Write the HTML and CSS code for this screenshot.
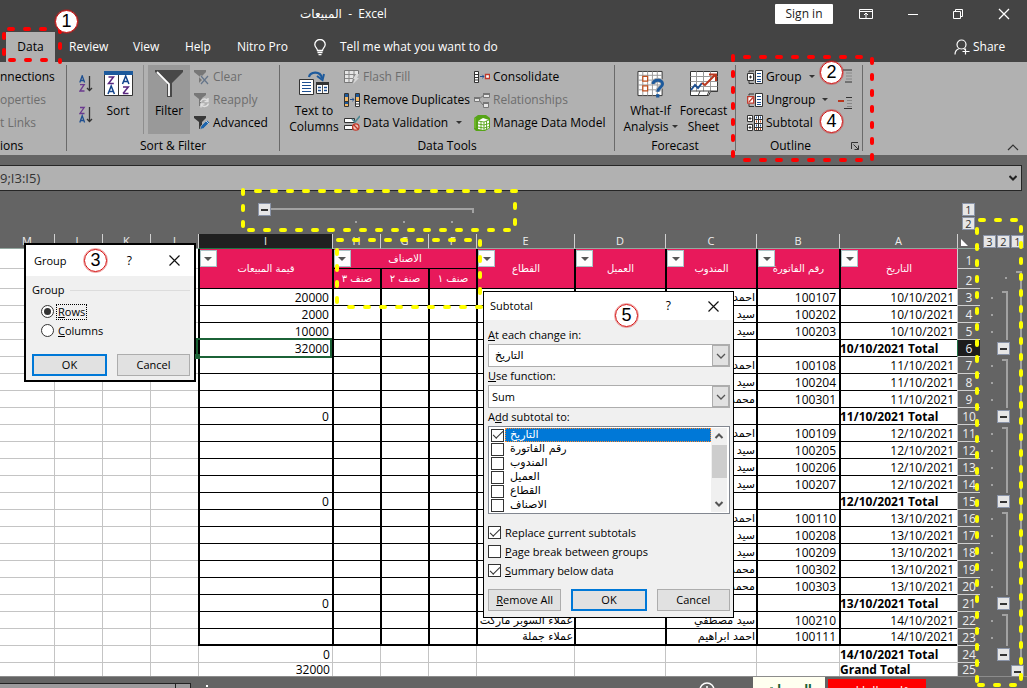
FILE: index.html
```html
<!DOCTYPE html>
<html lang="en">
<head>
    <meta charset="UTF-8">
    <meta name="viewport" content="width=device-width, initial-scale=1.0">
    <title>المبيعات - Excel</title>
    <link rel="stylesheet" href="styles.css">
</head>
<body>

    <header class="titlebar">
        <div class="title"><bdi>المبيعات</bdi>&nbsp; - &nbsp;Excel</div>
        <button class="signin">Sign in</button>
        <div class="window-buttons">
            <button aria-label="Ribbon display options"><svg width="14" height="12" viewBox="0 0 14 12"><path d="M.5 1.5h13v9H.5zM.5 3.5h13M7 10V5M5 7l2-2 2 2" fill="none" stroke="#fff"/></svg></button>
            <button aria-label="Minimize"><svg width="12" height="12" viewBox="0 0 12 12"><path d="M1 6.500h10" stroke="#fff"/></svg></button>
            <button aria-label="Restore"><svg width="12" height="12" viewBox="0 0 12 12"><path d="M1.500 3.500h7v7h-7zM3.500 3.500v-2h7v7h-2" fill="none" stroke="#fff"/></svg></button>
            <button aria-label="Close"><svg width="12" height="12" viewBox="0 0 12 12"><path d="M1 1l10 10M11 1L1 11" stroke="#fff" stroke-width="1.300"/></svg></button>
        </div>
    </header>

    <nav class="tabs">
        <button class="tab active">Data</button>
        <button class="tab">Review</button>
        <button class="tab">View</button>
        <button class="tab">Help</button>
        <button class="tab nitro">Nitro Pro</button>
        <button class="tab tell">
            <svg width="12" height="17" viewBox="0 0 12 17"><path d="M3.500 11.500C3.500 9 .8 8.500.8 5.500a5.200 5 0 0 1 10.400 0c0 3-2.700 3.500-2.700 6zM3.500 13.500h5M4.500 15.700h3" fill="none" stroke="#fff" stroke-width="1.300"/></svg>
            Tell me what you want to do
        </button>
        <button class="tab share">
            <svg width="16" height="16" viewBox="0 0 16 16"><circle cx="7.500" cy="5.500" r="4.500" fill="none" stroke="#fff" stroke-width="1.200"/><path d="M1 15.500c0-3 2-5.300 4.500-6M9.500 9.500l1.500 1M11.500 9.500v6M8.500 12.500h7" fill="none" stroke="#fff" stroke-width="1.200"/></svg>
            Share
        </button>
    </nav>

    <section class="ribbon">
        <div class="group connections">
            <div class="tools">
                <div class="stack">
                    <button class="tool">nnections</button>
                    <button class="tool" disabled>operties</button>
                    <button class="tool" disabled>t Links</button>
                </div>
            </div>
            <div class="caption">ions</div>
        </div>

        <div class="group sort-filter">
            <div class="tools">
                <div class="sorters">
                    <button aria-label="Sort A to Z">
                        <svg width="14" height="18" viewBox="0 0 14 18"><g fill="none" stroke-width="1.300"><path d="M.8 7.500L3.200.8l2.400 6.700M1.700 5.500h3" stroke="#1d4f91"/><path d="M1 9.700h4.200L1 16h4.500" stroke="#6b3a8f"/><path d="M10.500 1v14.500M8 13l2.500 2.500L13 13" stroke="#333"/></g></svg>
                    </button>
                    <button aria-label="Sort Z to A">
                        <svg width="14" height="18" viewBox="0 0 14 18"><g fill="none" stroke-width="1.300"><path d="M1 1.500h4.200L1 7.500h4.500" stroke="#6b3a8f"/><path d="M.8 16.500l2.400-6.700 2.400 6.700M1.700 14.500h3" stroke="#1d4f91"/><path d="M10.500 1v14.500M8 13l2.500 2.500L13 13" stroke="#333"/></g></svg>
                    </button>
                </div>
                <button class="big sort">
                    <svg width="29" height="28" viewBox="0 0 29 28"><path d="M.5 1.500h28v24H.5z" fill="#fff" stroke="#333"/><path d="M0 1h29v4H0z" fill="#1d5a9c"/><path d="M14.500 5v20" stroke="#333"/><g fill="none" stroke-width="1.500"><path d="M4.500 7h5l-5 6.500h5.300M19 23.500h5.500M19 17h5.300l-5.300 6.500" stroke="#59277f"/><path d="M4 24l3.200-8 3.200 8M5.200 21.500h4M18.500 14l3.200-8 3.200 8M19.700 11.500h4" stroke="#12448c"/></g></svg>
                    <span>Sort</span>
                </button>
                <button class="big filter">
                    <svg width="28" height="28" viewBox="0 0 28 28"><path d="M0 0h28v2L17 13v14h-5V13L0 2z" fill="#484848"/><path d="M2 2l12 12v12" fill="none" stroke="#fff" stroke-width="1.800"/></svg>
                    <span>Filter</span>
                </button>
                <div class="stack">
                    <button class="tool" disabled>
                        <svg width="16" height="16" viewBox="0 0 16 16"><path d="M0 1h12v2L8 7v7H5V7L0 3z" fill="#777"/><path d="M6 7l8 8M14 7l-8 8" stroke="#b1b1b1" stroke-width="3"/><path d="M7 7l7 8M14 7l-7 8" stroke="#65758a" stroke-width="1.200"/></svg>
                        Clear
                    </button>
                    <button class="tool" disabled>
                        <svg width="16" height="16" viewBox="0 0 16 16"><path d="M0 1h12v2L8 6 6 14H5V7L0 3z" fill="#777"/><path d="M6.500 10a4 4 0 0 1 7-1.500M14 6v3.500h-3.500M14.500 11.500a4 4 0 0 1-7 1.500M7 15.500V12h3.500" fill="none" stroke="#e0e0e0" stroke-width="1.400"/></svg>
                        Reapply
                    </button>
                    <button class="tool">
                        <svg width="16" height="16" viewBox="0 0 16 16"><path d="M0 1h12v2L8 7v7H5V7L0 3z" fill="#383838"/><path d="M6 14.500l1-3.500 6-6 2.500 2.500-6 6z" fill="#1d65ad" stroke="#b1b1b1" stroke-width=".8"/><path d="M12 6l2.500 2.500" stroke="#fff" stroke-width=".7"/></svg>
                        Advanced
                    </button>
                </div>
            </div>
            <div class="caption">Sort &amp; Filter</div>
        </div>

        <div class="group data-tools">
            <div class="tools">
                <button class="big columns">
                    <svg width="30" height="28" viewBox="0 0 30 28"><path d="M.5 9.500h14v15H.5z" fill="#fff" stroke="#333"/><path d="M3 12.500h9M3 15.500h9M3 18.500h9M3 21.500h9" stroke="#1d4f91" stroke-width="1.200"/><path d="M17.500 12.500h12v11h-12z" fill="#fff" stroke="#333"/><path d="M17 12h13v3H17z" fill="#333"/><path d="M23.500 15v8" stroke="#555"/><path d="M19 17.500h3M19 20.500h3M25 17.500h3M25 20.500h3" stroke="#1d4f91" stroke-width="1.300"/><path d="M10 7c1-5 11-7 13 1" fill="none" stroke="#1d5a9c" stroke-width="2.200"/><path d="M18 6l5.500 4L25 4" fill="none" stroke="#1d5a9c" stroke-width="2"/></svg>
                    <span>Text to<br>Columns</span>
                </button>
                <div class="stack first">
                    <button class="tool" disabled>
                        <svg width="16" height="16" viewBox="0 0 16 16"><path d="M.5 1.500h14v4h-4l-2 8h-8z" fill="#e6e6e6" stroke="#777"/><path d="M1 5.500h12M1 9.500h8M5 2v11M10 2v5" stroke="#888"/><path d="M12 5h3l-2 4h2l-6 6 2-5H9z" fill="#d8d8d8"/></svg>
                        Flash Fill
                    </button>
                    <button class="tool">
                        <svg width="16" height="16" viewBox="0 0 16 16"><path d="M.5 1.500h4v13h-4zM11.500 1.500h4v13h-4z" fill="#fff" stroke="#333"/><path d="M1 2h3v3H1zM1 10h3v2H1zM12 2h3v3h-3z" fill="#1d5a9c"/><path d="M1 5h3v4H1zM1 12h3v2H1zM12 5h3v4h-3z" fill="#f3b968"/><path d="M0 9.500h5M11 9.500h5M11 12h5" stroke="#333"/><path d="M6 7.500h4M8.300 5.800L10 7.500 8.300 9.200" fill="none" stroke="#1d4f91"/></svg>
                        Remove Duplicates
                    </button>
                    <button class="tool">
                        <svg width="16" height="16" viewBox="0 0 16 16"><path d="M.5 3.500h10v4H.5zM.5 10.500h8v4h-8z" fill="#fff" stroke="#333"/><path d="M8 4l3 3 5-6" fill="none" stroke="#4c8794" stroke-width="1.600"/><circle cx="11.800" cy="12" r="3.200" fill="#efc2b8" stroke="#c0392b" stroke-width="1.300"/><path d="M9.700 9.800l4.300 4.400" stroke="#c0392b" stroke-width="1.300"/></svg>
                        Data Validation
                        <span class="caret"></span>
                    </button>
                </div>
                <div class="stack">
                    <button class="tool">
                        <svg width="16" height="16" viewBox="0 0 16 16"><path d="M.5 2.500h4v11h-4zM.5 5.500h4M.5 8.500h4M.5 11h4" fill="#fff" stroke="#333"/><path d="M6 7.500h4M8.300 5.800L10 7.500 8.300 9.200" fill="none" stroke="#1d4f91"/><path d="M11.500 5.500h4v4h-4z" fill="#fff" stroke="#c0392b" stroke-width="1.300"/></svg>
                        Consolidate
                    </button>
                    <button class="tool" disabled>
                        <svg width="16" height="16" viewBox="0 0 16 16"><path d="M5 7l5-4M5 8l4 5" stroke="#777"/><path d="M.5 5.500h5v4h-5zM9.500 1.500h6v4h-6zM9.500 10.500h5v5h-5z" fill="#e6e6e6" stroke="#777"/><path d="M0 5h6v2H0zM9 1h7v2H9zM9 10h6v2H9z" fill="#777"/></svg>
                        Relationships
                    </button>
                    <button class="tool">
                        <svg width="16" height="16" viewBox="0 0 16 16"><path d="M0 3l4-3h8l4 3v10l-5 3H2l-2-2z" fill="#56a417"/><path d="M1 3v10" stroke="#86c440"/><path d="M4 6l5-3 6 2v8l-5 2-6-1z" fill="#fff"/><path d="M4 6l6 1 5-2M10 7v8M7 6.500v8M12.500 6v8M4 9l6 1 5-1.500M4 12l6 1 5-1.500" fill="none" stroke="#56a417" stroke-width=".9"/></svg>
                        Manage Data Model
                    </button>
                </div>
            </div>
            <div class="caption">Data Tools</div>
        </div>

        <div class="group forecast">
            <div class="tools">
                <button class="big">
                    <svg width="28" height="28" viewBox="0 0 28 29"><path d="M.5 1.500h25v25H.5z" fill="#fff" stroke="#333"/><path d="M.5 5.500h25M.5 10.500h25M.5 15.500h25M.5 20.500h25M5.500 1.500v25M10.500 1.500v25M15.500 1.500v25M20.500 1.500v25" stroke="#999"/><path d="M5.500 6.500h5v5h-5zM5.500 16.500h5v5h-5z" fill="#fff" stroke="#c0501f" stroke-width="1.300"/><path d="M16 14.500c1-5.500 10-5 10 0 0 3.500-5 3.500-5 8" fill="none" stroke="#b1b1b1" stroke-width="5"/><path d="M16 14.500c1-5.500 10-5 10 0 0 3.500-5 3.500-5 8" fill="none" stroke="#1d5a9c" stroke-width="3"/><path d="M19.300 25h3.400v3.500h-3.400z" fill="#1d5a9c"/></svg>
                    <span>What-If<br>Analysis<i class="caret"></i></span>
                </button>
                <button class="big">
                    <svg width="28" height="28" viewBox="0 0 28 28"><path d="M.5 1.500h27v20h-7l-2 4h-18z" fill="#fff" stroke="#333"/><path d="M.5 6.500h27M.5 11.500h27M.5 16.500h27M6.500 1.500v20M13.500 1.500v20M20.500 1.500v20" stroke="#999"/><path d="M1 21h27M10 21l-2 5M19 21l-2 5" stroke="#444"/><path d="M1 20l4-5 3 3 4-5" fill="none" stroke="#1d4f91" stroke-width="2"/><path d="M12 13l3 2 10-10M19 4.500h7V11" fill="none" stroke="#b8371f" stroke-width="2"/></svg>
                    <span>Forecast<br>Sheet</span>
                </button>
            </div>
            <div class="caption">Forecast</div>
        </div>

        <div class="group outline">
            <div class="tools">
                <div class="stack">
                    <button class="tool">
                        <svg width="17" height="16" viewBox="0 0 17 16"><path d="M2 3.500V2h5M2 12v2.500h5" fill="none" stroke="#333"/><path d="M.5 4.500h6v7h-6z" fill="#fff" stroke="#333"/><path d="M2 8h3M3.500 6.500v3" stroke="#333"/><path d="M8.500 1.500h7v13h-7z" fill="#fff" stroke="#333"/><path d="M10 4.500h4M10 7.500h4M10 10.500h4M10 12.500h4" stroke="#1d4f91"/></svg>
                        Group
                        <span class="caret"></span>
                    </button>
                    <button class="tool">
                        <svg width="17" height="16" viewBox="0 0 17 16"><path d="M2 3.500V2h5M2 12v2.500h5" fill="none" stroke="#333"/><path d="M.7 4.700h6v6.500h-6z" fill="#fff" stroke="#c0392b" stroke-width="1.300"/><path d="M2 10l4-4.500" stroke="#c0392b" stroke-width="1.300"/><path d="M8.500 1.500h7v13h-7z" fill="#fff" stroke="#333"/><path d="M10 4.500h4M10 7.500h4M10 10.500h4M10 12.500h4" stroke="#1d4f91"/></svg>
                        Ungroup
                        <span class="caret"></span>
                    </button>
                    <button class="tool">
                        <svg width="17" height="16" viewBox="0 0 17 16"><path d="M.5.500h5v6h-5zM.5 9.500h5v6h-5zM7.500.500h8v15h-8z" fill="#fff" stroke="#333"/><path d="M1.500 3.500h3M3 2v3M1.500 12.500h3M3 11v3M7.500 4.500h8M7.500 8.500h8M7.500 12.500h8M11.500.500v15" stroke="#333"/><path d="M9 2.500h1M13 2.500h1M9 10.500h1M13 10.500h1" stroke="#1d4f91" stroke-width="2"/><path d="M9 6.500h1M13 6.500h1M9 14h1M13 14h1" stroke="#c0501f" stroke-width="2"/></svg>
                        Subtotal
                    </button>
                </div>
                <div class="details">
                    <button aria-label="Show detail"><svg width="15" height="14" viewBox="0 0 15 14"><path d="M5 1h9M7 13h7" stroke="#333"/><path d="M8 4h6M8 7h6M8 10h6" stroke="#888"/></svg></button>
                    <button aria-label="Hide detail"><svg width="15" height="14" viewBox="0 0 15 14"><path d="M0 5h6" stroke="#b8371f" stroke-width="2"/><path d="M8 1.500h6M6 12.500h8" stroke="#333"/><path d="M9 4.500h5M9 7.500h5M9 10.500h5" stroke="#888"/></svg></button>
                </div>
            </div>
            <div class="caption">Outline
                <button class="launcher" aria-label="Outline settings"><svg width="8" height="8" viewBox="0 0 8 8"><path d="M.5 7V.5H7M2.500 2.500l5 5M7.500 3.500v4h-4" fill="none" stroke="#333"/></svg></button>
            </div>
        </div>

        <button class="collapse" aria-label="Collapse the ribbon"><svg width="12" height="7" viewBox="0 0 12 7"><path d="M1 6l5-5 5 5" fill="none" stroke="#333" stroke-width="1.200"/></svg></button>
    </section>

    <div class="formula">
        <span>9;I3:I5)</span>
        <svg width="8" height="6" viewBox="0 0 8 6"><path d="M.5 1L4 4.500 7.500 1" fill="none" stroke="#222" stroke-width="2"/></svg>
    </div>

    <main class="sheet">
        <table>
            <colgroup>
                <col class="w-gutter"><col class="w-head"><col class="w-a"><col class="w-b"><col class="w-c"><col class="w-c"><col class="w-e"><col class="w-s"><col class="w-s"><col class="w-s"><col class="w-i"><col class="w-s"><col class="w-s"><col class="w-s"><col>
            </colgroup>
            <thead>
                <tr class="level one"><td></td><td><button class="box">1</button></td><td colspan="5"></td><td colspan="3"><div class="bar hook"></div></td><td><div class="span"><button class="box minus" aria-label="Collapse columns"></button><div class="bar"></div></div></td><td colspan="4"></td></tr>
                <tr class="level two"><td></td><td><button class="box">2</button></td><td colspan="5"></td><td><i class="dot"></i></td><td><i class="dot"></i></td><td><i class="dot"></i></td><td colspan="5"></td></tr>
                <tr class="letters"><td class="g"><button class="box">3</button><button class="box">2</button><button class="box">1</button></td><th class="corner"><svg width="7" height="7" viewBox="0 0 7 7"><path d="M0 0v7h7z" fill="#fff"/></svg></th><th>A</th><th>B</th><th>C</th><th>D</th><th>E</th><th>F</th><th>G</th><th>H</th><th class="picked">I</th><th>J</th><th>K</th><th>L</th><th>M</th></tr>
            </thead>
            <tbody>
                <tr class="top"><td class="g"></td><th>1</th><td class="hd" rowspan="2"><button class="drop" aria-label="Filter"></button>التاريخ</td><td class="hd" rowspan="2"><button class="drop" aria-label="Filter"></button>رقم الفاتورة</td><td class="hd" rowspan="2"><button class="drop" aria-label="Filter"></button>المندوب</td><td class="hd" rowspan="2"><button class="drop" aria-label="Filter"></button>العميل</td><td class="hd" rowspan="2"><button class="drop" aria-label="Filter"></button>القطاع</td><td class="hd" colspan="3"><button class="drop" aria-label="Filter"></button>الاصناف</td><td class="hd" rowspan="2"><button class="drop" aria-label="Filter"></button>قيمة المبيعات</td><td class="e"></td><td class="e"></td><td class="e"></td><td class="e last"></td></tr>
                <tr class="top"><td class="g"><i></i><i class="dot"></i><i class="start"></i></td><th>2</th><td class="hd">صنف ١</td><td class="hd">صنف ٢</td><td class="hd">صنف ٣</td><td class="e"></td><td class="e"></td><td class="e"></td><td class="e last"></td></tr>
                <tr><td class="g"><i class="dot"></i><i class="start"></i><i class="line"></i></td><th>3</th><td>10/10/2021</td><td>100107</td><td>احمد ابراهيم</td><td></td><td></td><td></td><td></td><td></td><td>20000</td><td></td><td></td><td></td><td></td></tr>
                <tr><td class="g"><i class="dot"></i><i class="line"></i><i class="line"></i></td><th>4</th><td>10/10/2021</td><td>100202</td><td>سيد مصطفي</td><td></td><td></td><td></td><td></td><td></td><td>2000</td><td></td><td></td><td></td><td></td></tr>
                <tr><td class="g"><i class="dot"></i><i class="line"></i><i class="line"></i></td><th>5</th><td>10/10/2021</td><td>100203</td><td>سيد مصطفي</td><td></td><td></td><td></td><td></td><td></td><td>10000</td><td></td><td></td><td></td><td></td></tr>
                <tr><td class="g"><i></i><button class="box minus" aria-label="Collapse rows 3 to 5"></button><i class="line"></i></td><th class="picked">6</th><td class="total">10/10/2021 Total</td><td></td><td></td><td></td><td></td><td></td><td></td><td></td><td class="selected">32000</td><td></td><td></td><td></td><td></td></tr>
                <tr><td class="g"><i class="dot"></i><i class="start"></i><i class="line"></i></td><th>7</th><td>11/10/2021</td><td>100108</td><td>احمد ابراهيم</td><td></td><td></td><td></td><td></td><td></td><td></td><td></td><td></td><td></td><td></td></tr>
                <tr><td class="g"><i class="dot"></i><i class="line"></i><i class="line"></i></td><th>8</th><td>11/10/2021</td><td>100204</td><td>سيد مصطفي</td><td></td><td></td><td></td><td></td><td></td><td></td><td></td><td></td><td></td><td></td></tr>
                <tr><td class="g"><i class="dot"></i><i class="line"></i><i class="line"></i></td><th>9</th><td>11/10/2021</td><td>100301</td><td>محمد</td><td></td><td></td><td></td><td></td><td></td><td></td><td></td><td></td><td></td><td></td></tr>
                <tr><td class="g"><i></i><button class="box minus" aria-label="Collapse rows 7 to 9"></button><i class="line"></i></td><th>10</th><td class="total">11/10/2021 Total</td><td></td><td></td><td></td><td></td><td></td><td></td><td></td><td>0</td><td></td><td></td><td></td><td></td></tr>
                <tr><td class="g"><i class="dot"></i><i class="start"></i><i class="line"></i></td><th>11</th><td>12/10/2021</td><td>100109</td><td>احمد ابراهيم</td><td></td><td></td><td></td><td></td><td></td><td></td><td></td><td></td><td></td><td></td></tr>
                <tr><td class="g"><i class="dot"></i><i class="line"></i><i class="line"></i></td><th>12</th><td>12/10/2021</td><td>100205</td><td>سيد مصطفي</td><td></td><td></td><td></td><td></td><td></td><td></td><td></td><td></td><td></td><td></td></tr>
                <tr><td class="g"><i class="dot"></i><i class="line"></i><i class="line"></i></td><th>13</th><td>12/10/2021</td><td>100206</td><td>سيد مصطفي</td><td></td><td></td><td></td><td></td><td></td><td></td><td></td><td></td><td></td><td></td></tr>
                <tr><td class="g"><i class="dot"></i><i class="line"></i><i class="line"></i></td><th>14</th><td>12/10/2021</td><td>100207</td><td>سيد مصطفي</td><td></td><td></td><td></td><td></td><td></td><td></td><td></td><td></td><td></td><td></td></tr>
                <tr><td class="g"><i></i><button class="box minus" aria-label="Collapse rows 11 to 14"></button><i class="line"></i></td><th>15</th><td class="total">12/10/2021 Total</td><td></td><td></td><td></td><td></td><td></td><td></td><td></td><td>0</td><td></td><td></td><td></td><td></td></tr>
                <tr><td class="g"><i class="dot"></i><i class="start"></i><i class="line"></i></td><th>16</th><td>13/10/2021</td><td>100110</td><td>احمد ابراهيم</td><td></td><td></td><td></td><td></td><td></td><td></td><td></td><td></td><td></td><td></td></tr>
                <tr><td class="g"><i class="dot"></i><i class="line"></i><i class="line"></i></td><th>17</th><td>13/10/2021</td><td>100208</td><td>سيد مصطفي</td><td></td><td></td><td></td><td></td><td></td><td></td><td></td><td></td><td></td><td></td></tr>
                <tr><td class="g"><i class="dot"></i><i class="line"></i><i class="line"></i></td><th>18</th><td>13/10/2021</td><td>100209</td><td>سيد مصطفي</td><td></td><td></td><td></td><td></td><td></td><td></td><td></td><td></td><td></td><td></td></tr>
                <tr><td class="g"><i class="dot"></i><i class="line"></i><i class="line"></i></td><th>19</th><td>13/10/2021</td><td>100302</td><td>محمد</td><td></td><td></td><td></td><td></td><td></td><td></td><td></td><td></td><td></td><td></td></tr>
                <tr><td class="g"><i class="dot"></i><i class="line"></i><i class="line"></i></td><th>20</th><td>13/10/2021</td><td>100303</td><td>محمد</td><td></td><td></td><td></td><td></td><td></td><td></td><td></td><td></td><td></td><td></td></tr>
                <tr><td class="g"><i></i><button class="box minus" aria-label="Collapse rows 16 to 20"></button><i class="line"></i></td><th>21</th><td class="total">13/10/2021 Total</td><td></td><td></td><td></td><td></td><td></td><td></td><td></td><td>0</td><td></td><td></td><td></td><td></td></tr>
                <tr><td class="g"><i class="dot"></i><i class="start"></i><i class="line"></i></td><th>22</th><td>14/10/2021</td><td>100210</td><td>سيد مصطفي</td><td></td><td>عملاء السوبر ماركت</td><td></td><td></td><td></td><td></td><td></td><td></td><td></td><td></td></tr>
                <tr class="bottom"><td class="g"><i class="dot"></i><i class="line"></i><i class="line"></i></td><th>23</th><td>14/10/2021</td><td>100111</td><td>احمد ابراهيم</td><td></td><td>عملاء جملة</td><td></td><td></td><td></td><td></td><td></td><td></td><td></td><td></td></tr>
                <tr class="plain"><td class="g"><i></i><button class="box minus" aria-label="Collapse rows 22 to 23"></button><i class="line"></i></td><th>24</th><td class="total">14/10/2021 Total</td><td></td><td></td><td></td><td></td><td></td><td></td><td></td><td>0</td><td></td><td></td><td></td><td></td></tr>
                <tr class="plain grand"><td class="g"><i></i><i></i><button class="box minus" aria-label="Collapse all rows"></button></td><th>25</th><td class="total">Grand Total</td><td></td><td></td><td></td><td></td><td></td><td></td><td></td><td>32000</td><td></td><td></td><td></td><td></td></tr>
            </tbody>
        </table>
    </main>

    <footer class="sheetbar">
        <div class="scroller"></div>
        <button class="step" aria-label="Scroll right"><svg width="5" height="7" viewBox="0 0 5 7"><path d="M0 0l5 3.500L0 7z" fill="#222"/></svg></button>
        <i class="grip"></i>
        <button class="add" aria-label="New sheet"><svg width="16" height="16" viewBox="0 0 16 16"><circle cx="8" cy="8" r="7" fill="none" stroke="#fff" stroke-width="1.500"/><path d="M8 4v8M4 8h8" stroke="#fff" stroke-width="1.500"/></svg></button>
        <button class="sheet-tab current">المبيعات</button>
        <button class="sheet-tab red">قاعدة البيانات</button>
    </footer>

    <form class="dialog group-dialog">
        <div class="dialog-title"><span>Group</span><button type="button" aria-label="Help">?</button><button type="button" aria-label="Close"><svg width="11" height="11" viewBox="0 0 11 11"><path d="M.5.500l10 10M10.500.500l-10 10" stroke="#111" stroke-width="1.200"/></svg></button></div>
        <div class="dialog-body">
            <div class="legend">Group</div>
            <label class="option"><input type="radio" name="axis" checked><span class="focused"><u>R</u>ows</span></label>
            <label class="option"><input type="radio" name="axis"><span><u>C</u>olumns</span></label>
            <div class="actions"><button type="button" class="push default">OK</button><button type="button" class="push">Cancel</button></div>
        </div>
    </form>

    <form class="dialog subtotal-dialog">
        <div class="dialog-title"><span>Subtotal</span><button type="button" aria-label="Help">?</button><button type="button" aria-label="Close"><svg width="11" height="11" viewBox="0 0 11 11"><path d="M.5.500l10 10M10.500.500l-10 10" stroke="#111" stroke-width="1.200"/></svg></button></div>
        <div class="dialog-body">
            <label class="field" for="change"><u>A</u>t each change in:</label>
            <div class="combo"><select id="change" class="arabic"><option>التاريخ</option></select><span class="arrow"><svg width="10" height="6" viewBox="0 0 10 6"><path d="M1 1l4 4 4-4" fill="none" stroke="#555" stroke-width="1.300"/></svg></span></div>
            <label class="field" for="func"><u>U</u>se function:</label>
            <div class="combo"><select id="func"><option>Sum</option></select><span class="arrow"><svg width="10" height="6" viewBox="0 0 10 6"><path d="M1 1l4 4 4-4" fill="none" stroke="#555" stroke-width="1.300"/></svg></span></div>
            <div class="field">A<u>d</u>d subtotal to:</div>
            <div class="list">
                <div class="items">
                    <label class="on"><input type="checkbox" checked><span>التاريخ</span></label>
                    <label><input type="checkbox"><span>رقم الفاتورة</span></label>
                    <label><input type="checkbox"><span>المندوب</span></label>
                    <label><input type="checkbox"><span>العميل</span></label>
                    <label><input type="checkbox"><span>القطاع</span></label>
                    <label><input type="checkbox"><span>الاصناف</span></label>
                </div>
                <div class="scrollbar">
                    <svg width="10" height="6" viewBox="0 0 10 6"><path d="M1.500 5L5 1.500 8.500 5" fill="none" stroke="#555" stroke-width="2"/></svg>
                    <div class="thumb"></div>
                    <svg width="10" height="6" viewBox="0 0 10 6"><path d="M1.500 1L5 4.500 8.500 1" fill="none" stroke="#555" stroke-width="2"/></svg>
                </div>
            </div>
            <label class="option"><input type="checkbox" checked><span>Replace <u>c</u>urrent subtotals</span></label>
            <label class="option"><input type="checkbox"><span><u>P</u>age break between groups</span></label>
            <label class="option"><input type="checkbox" checked><span><u>S</u>ummary below data</span></label>
            <div class="actions"><button type="button" class="push"><u>R</u>emove All</button><button type="button" class="push default">OK</button><button type="button" class="push">Cancel</button></div>
        </div>
    </form>

    <!-- dashed marks and step numbers over the window -->
    <svg class="marks" width="1027" height="688" viewBox="0 0 1027 688">
        <path class="mark-red" d="M9 29H48M60 28V62M10 60H48M4 34V56"/>
        <path class="mark-red" d="M745 57H862M872 59V160M745 160H862M733 56V156"/>
        <path class="mark-yellow" d="M256 191H516M515 204V225M249 230H510M243 190V227"/>
        <path class="mark-yellow" d="M338 240H471M480 241V295M349 307H481M337 250V303"/>
        <path class="mark-yellow" d="M980 220H1016M1021 227V680M979 685H1016M977 229V682"/>
    </svg>
    <span class="step-no no1">1</span>
    <span class="step-no no2">2</span>
    <span class="step-no no3">3</span>
    <span class="step-no no4">4</span>
    <span class="step-no no5">5</span>

</body>
</html>
```
FILE: styles.css
```css
* {
    box-sizing: border-box;
}
body {
    margin: 0;
    height: 100vh;
    overflow: hidden;
    position: relative;
    display: flex;
    flex-direction: column;
    background-color: #646464;
    font-family: "Open Sans", "DejaVu Sans", sans-serif;
    font-size: 12px;
    line-height: 16px;
    color: #000;
}
button {
    font: inherit;
    color: inherit;
    background: none;
    border: 0;
    padding: 0;
}
svg {
    display: block;
    flex: none;
}

/* title bar and tabs */
.titlebar {
    display: flex;
    align-items: center;
    height: 28px;
    flex: none;
    padding-right: 17px;
    background-color: #444;
    color: #fff;
}
.title {
    flex: 1;
    padding-left: 300px;
}
.signin {
    width: 58px;
    height: 20px;
    background-color: #fff;
    color: #222;
    border-radius: 1px;
}
.window-buttons {
    display: flex;
    justify-content: space-between;
    width: 151px;
    margin-left: 26px;
}
.tabs {
    display: flex;
    align-items: flex-end;
    height: 34px;
    flex: none;
    padding: 0 24px 0 6px;
    background-color: #444;
    color: #fff;
}
.tab {
    display: flex;
    align-items: center;
    height: 30px;
    width: 52px;
    margin-left: 5px;
    white-space: nowrap;
    text-align: left;
}
.tab:nth-child(2) {
    width: 59px;
    margin-left: 14px;
}
.tab.active {
    width: 49px;
    margin-left: 0;
    justify-content: center;
    background-color: #b1b1b1;
    color: #000;
}
.tab:nth-child(4) {
    margin-left: 0;
    width: 47px;
}
.tab.nitro {
    width: 72px;
}
.tab.tell {
    flex: 1;
    gap: 14px;
}
.tab.share {
    width: 49px;
    gap: 3px;
    margin-left: 0;
}

/* ribbon */
.ribbon {
    display: flex;
    height: 93px;
    flex: none;
    position: relative;
    padding-top: 3px;
    background-color: #b1b1b1;
}
.group {
    display: flex;
    flex-direction: column;
    flex: none;
    height: 86px;
    border-right: 1px solid #6a6a6a;
    white-space: nowrap;
}
.tools {
    display: flex;
    height: 69px;
}
.caption {
    margin-top: 4px;
    text-align: center;
    position: relative;
}
.tool {
    display: flex;
    align-items: center;
    gap: 3px;
    height: 23px;
}
.tool:disabled {
    color: #6d6d6d;
}
.big {
    display: flex;
    flex-direction: column;
    align-items: center;
    gap: 5px;
    padding-top: 5px;
}
.big .caret {
    display: inline-block;
    margin: 0 0 3px 3px;
}
.caret {
    border: 3px solid transparent;
    border-top-color: #333;
    border-bottom: 0;
    margin-left: 5px;
}
.connections {
    width: 67px;
}
.connections .caption {
    text-align: left;
}
.sort-filter {
    width: 213px;
}
.sort-filter .tools {
    padding-left: 12px;
}
.sorters {
    display: flex;
    flex-direction: column;
    gap: 13px;
    padding-top: 10px;
}
.sort {
    width: 51px;
    border-right: 1px solid #8e8e8e;
}
.filter {
    width: 42px;
    margin: 0 4px;
    background-color: #999;
}
.data-tools {
    width: 335px;
}
.columns {
    width: 52px;
    margin: 0 4px 0 8px;
}
.stack.first {
    width: 130px;
}
.forecast {
    width: 121px;
}
.forecast .tools {
    justify-content: center;
    padding-left: 4px;
}
.forecast .big {
    width: 53px;
}
.outline {
    width: 127px;
}
.outline .tools {
    padding-left: 11px;
}
.outline .stack {
    width: 91px;
}
.outline .tool {
    gap: 2px;
}
.details svg {
    margin: 4px 0 9px;
}
.details button {
    display: block;
}
.outline .caption {
    padding-right: 17px;
}
.launcher {
    position: absolute;
    right: 3px;
    top: 4px;
}
.collapse {
    position: absolute;
    right: 8px;
    bottom: 4px;
}

/* formula bar */
.formula {
    display: flex;
    align-items: center;
    justify-content: space-between;
    height: 26px;
    flex: none;
    margin: 10px 5px 0 0;
    padding-right: 4px;
    background-color: #b1b1b1;
    border: 1px solid #262626;
    border-left: 0;
    color: #333;
}
.formula span {
    font-size: 13px;
}

/* sheet */
.sheet {
    flex: 1;
    min-height: 0;
    overflow: hidden;
    direction: rtl;
    padding-top: 12px;
}
.sheet table {
    table-layout: fixed;
    width: 100%;
    border-spacing: 0;
    border-collapse: separate;
    line-height: 14px;
}
.w-gutter { width: 47px; }
.w-head { width: 23px; }
.w-a { width: 118px; }
.w-b { width: 83px; }
.w-c { width: 91px; }
.w-e { width: 98px; }
.w-s { width: 48px; }
.w-i { width: 134px; }
.sheet td,
.sheet th {
    padding: 0;
    font-weight: 400;
    white-space: nowrap;
}
.level.one {
    height: 14px;
}
.level.two {
    height: 17px;
}
.level td {
    vertical-align: top;
    text-align: center;
}
.box {
    display: block;
    width: 13px;
    height: 13px;
    margin: 0 auto;
    background-color: #e6e6e6;
    border: 1px solid #8a94a8;
    color: #333;
    font-size: 11px;
    line-height: 11px;
    text-align: center;
}
.minus::before {
    content: "";
    display: block;
    height: 2px;
    margin: 1px 2px 0;
    background-color: #333;
}
.span {
    display: grid;
    grid-template-columns: 1fr 13px 1fr;
    direction: ltr;
}
.span .box {
    grid-column: 2;
}
.bar {
    height: 5px;
    margin-top: 5px;
    border-top: 2px solid #a2a2a2;
}
.bar.hook {
    border-right: 2px solid #a2a2a2;
    margin-right: 2px;
}
.dot {
    display: block;
    width: 2px;
    height: 2px;
    background-color: #a2a2a2;
}
.level .dot {
    margin: 4px auto 0;
}
.letters th {
    height: 15px;
    color: #eee;
    border-left: 1px solid #d0d0d0;
    border-bottom: 1px solid #93a8a0;
    font-size: 11px;
    line-height: 14px;
}
.letters th:last-child {
    border-left: 0;
}
.letters .picked {
    background-color: #202020;
    border-bottom: 1px solid #217346;
}
.corner svg {
    margin: 2px 12px 0 0;
}
.sheet .g {
    background-color: #646464;
    direction: ltr;
}
.letters .g {
    display: flex;
    height: 15px;
    padding: 1px 3px;
    gap: 1px;
}
.letters .g .box {
    margin: 0;
}
tbody tr {
    height: 17px;
}
tbody .top {
    height: 20px;
}
.sheet tbody th {
    padding-top: 1px;
    border-left: 1px solid #d0d0d0;
    border-bottom: 1px solid #d0d0d0;
    color: #eee;
    vertical-align: bottom;
}
.sheet tbody th.picked {
    background-color: #1c1c1c;
    border-left-color: #217346;
}
tbody td {
    background-color: #fff;
    border-bottom: 1px solid #000;
    border-left: 2px solid #000;
    text-align: right;
    direction: ltr;
}
tbody tr:not(.top) td {
    padding: 1px 1px 0;
}
tbody .g {
    display: flex;
    height: 17px;
}
tbody tr:not(.grand) td.g,
tbody tr.grand td.g {
    border: 0;
    padding: 0 2px 0 3px;
}
tbody .top .g {
    height: 20px;
}
.g i {
    display: block;
    width: 14px;
    flex: none;
}
.g .box.minus {
    flex: none;
    margin: 2px 1px 0 0;
}
.g .dot {
    width: 2px;
    margin: 8px 4px 0 8px;
}
.g .line,
.g .start {
    margin: 0 3px 0 9px;
    width: 2px;
    background-color: #a2a2a2;
}
.g .start {
    width: 6px;
    margin: 2px 3px 0 5px;
    background: none;
    border-top: 2px solid #a2a2a2;
    border-right: 2px solid #a2a2a2;
}
tbody tr td:nth-child(5),
tbody tr td:nth-child(7) {
    font-family: "DejaVu Sans", sans-serif;
    font-size: 11px;
    direction: rtl;
    text-align: right;
}
tbody tr:not(.top) td:nth-child(n+12),
.plain td,
tbody .e {
    border-bottom-color: #c4c4c4;
    border-left: 1px solid #c4c4c4;
}
tbody tr:not(.top) td:nth-child(15),
tbody .e.last {
    border-left: 0;
}
tbody .bottom td:nth-child(n+3):nth-child(-n+11) {
    border-bottom-width: 2px;
}
tbody tr:not(.top) td.total {
    text-align: left;
    font-weight: 700;
}
tbody .grand,
tbody .grand .g {
    height: 13px;
    line-height: 13px;
}
tbody tr.grand:not(.top) td:not(.g),
.sheet tbody .grand th {
    padding-top: 0;
    padding-bottom: 0;
    border-bottom: 0;
}
tbody td.selected {
    position: relative;
}
.selected::after {
    content: "";
    position: absolute;
    inset: -2px;
    border: 2px solid #1b6236;
}
.selected::before {
    content: "";
    position: absolute;
    left: -3px;
    bottom: -3px;
    width: 5px;
    height: 5px;
    background-color: #1b6236;
    z-index: 1;
}
tbody tr td.hd {
    position: relative;
    background-color: #e8195b;
    color: #fff;
    font-family: "DejaVu Sans", sans-serif;
    font-size: 10px;
    text-align: center;
    direction: rtl;
}
.drop {
    position: absolute;
    left: 0;
    top: 1px;
    width: 17px;
    height: 17px;
    background-color: #fdfdfd;
    border: 1px solid #a9c3c6;
}
.drop::before {
    content: "";
    display: block;
    width: 0;
    margin: 1px auto 0;
    border: 4px solid transparent;
    border-top-color: #555;
    border-bottom: 0;
}

/* sheet tabs */
.sheetbar {
    display: flex;
    align-items: flex-start;
    height: 12px;
    flex: none;
    overflow: hidden;
    border-top: 1px solid #8c8c8c;
}
.scroller,
.step {
    height: 16px;
    margin-top: 6px;
    width: 176px;
    background-color: #9c9a9c;
    border: 1px solid #222;
    border-left: 0;
}
.step {
    width: 15px;
    display: grid;
    place-items: center;
}
.grip {
    width: 2px;
    height: 2px;
    margin: 8px auto 0 15px;
    background-color: #fff;
}
.add {
    margin: 5px 38px 0 0;
}
.sheet-tab {
    width: 72px;
    height: 24px;
    background-color: #fffff0;
    color: #1b6236;
    font-family: "DejaVu Sans", sans-serif;
    font-size: 11px;
    font-weight: 700;
}
.sheet-tab.red {
    width: 98px;
    margin: 2px 101px 0 3px;
    background-color: #f00;
    color: #fff;
    font-weight: 400;
}

/* dialogs */
.dialog {
    position: absolute;
    background-color: #f0f0f0;
    border: 2px solid #000;
    font-size: 11px;
}
.group-dialog {
    left: 24px;
    top: 243px;
    width: 172px;
}
.subtotal-dialog {
    left: 483px;
    top: 291px;
    width: 251px;
    border-width: 1px;
}
.dialog-title {
    display: flex;
    align-items: center;
    height: 31px;
    padding: 0 14px 0 8px;
    background-color: #fff;
}
.subtotal-dialog .dialog-title {
    height: 28px;
    padding-left: 6px;
}
.dialog-title span {
    flex: 1;
}
.dialog-title button:nth-child(2) {
    font-size: 12px;
}
.dialog-title button + button {
    margin-left: 37px;
}
.dialog-body {
    padding: 6px 4px 4px 6px;
}
.subtotal-dialog .dialog-body {
    padding: 7px 3px 6px 4px;
}
.legend {
    display: flex;
    align-items: center;
    gap: 5px;
    margin-bottom: 4px;
}
.legend::after {
    content: "";
    flex: 1;
    border-top: 1px solid #dcdcdc;
}
.option {
    display: flex;
    align-items: center;
    gap: 3px;
    height: 19px;
}
.group-dialog .option {
    padding-left: 9px;
}
input {
    appearance: none;
    flex: none;
    display: grid;
    place-items: center;
    width: 13px;
    height: 13px;
    margin: 0;
    background-color: #fff;
    border: 1px solid #333;
}
input[type="radio"] {
    border-radius: 50%;
}
input[type="radio"]:checked::before {
    content: "";
    width: 7px;
    height: 7px;
    border-radius: 50%;
    background-color: #333;
}
input[type="checkbox"]:checked::before {
    content: "";
    width: 9px;
    height: 4px;
    margin-bottom: 3px;
    border: solid #333;
    border-width: 0 0 1px 1px;
    transform: rotate(-45deg);
}
.option span {
    line-height: 14px;
    padding: 0 1px;
}
.option .focused {
    outline: 1px dotted #000;
}
.actions {
    display: flex;
    gap: 10px;
}
.group-dialog .actions {
    margin-top: 14px;
}
.push {
    flex: 1 1 0;
    height: 22px;
    background-color: #e1e1e1;
    border: 1px solid #adadad;
}
.push.default {
    border: 2px solid #0078d7;
}
.field {
    display: block;
    height: 16px;
}
.combo {
    display: flex;
    height: 23px;
    margin: 1px 0;
    border: 1px solid #adadad;
    background-color: #fff;
}
.combo select {
    flex: 1;
    appearance: none;
    border: 0;
    padding: 0 3px;
    background: none;
    font: inherit;
    color: #000;
}
.combo .arabic {
    padding-left: 6px;
    font-family: "DejaVu Sans", sans-serif;
    font-size: 11px;
}
.arrow {
    display: grid;
    place-items: center;
    width: 17px;
    background-color: #e1e1e1;
    border: 1px solid #adadad;
}
.list {
    display: flex;
    height: 88px;
    margin: 1px 0 9px;
    padding: 1px 2px;
    background-color: #fff;
    border: 1px solid #828790;
}
.items {
    flex: 1;
}
.items label {
    display: flex;
    align-items: center;
    height: 14px;
    gap: 1px;
    font-family: "DejaVu Sans", sans-serif;
    font-size: 11px;
    line-height: 14px;
}
.items span {
    flex: 1;
    padding-left: 5px;
}
.items .on span {
    background-color: #0078d7;
    color: #fff;
    outline: 1px dotted #ff8728;
    outline-offset: -1px;
}
.scrollbar {
    display: flex;
    flex-direction: column;
    align-items: center;
    width: 16px;
    padding: 5px 0;
    background-color: #f0f0f0;
}
.thumb {
    width: 15px;
    height: 33px;
    margin: 6px 0 auto;
    background-color: #cdcdcd;
}
.subtotal-dialog .actions {
    margin-top: 9px;
}

/* marks */
.marks {
    position: absolute;
    left: 0;
    top: 0;
    pointer-events: none;
}
.marks path {
    fill: none;
    stroke-width: 4;
    stroke-linecap: round;
    stroke-dasharray: 4 12;
}
.mark-red {
    stroke: #f00;
}
.mark-yellow {
    stroke: #ff0;
}
.step-no {
    position: absolute;
    width: 23px;
    height: 23px;
    border: 1px solid #d40f0f;
    outline: 1px solid #d40f0f60;
    border-radius: 50%;
    background-color: #fff;
    font: 18px/21px "Liberation Sans", sans-serif;
    text-align: center;
}
.no1 { left: 55px; top: 10px; }
.no2 { left: 820px; top: 61px; }
.no3 { left: 84px; top: 249px; }
.no4 { left: 820px; top: 110px; }
.no5 { left: 615px; top: 304px; }
```
